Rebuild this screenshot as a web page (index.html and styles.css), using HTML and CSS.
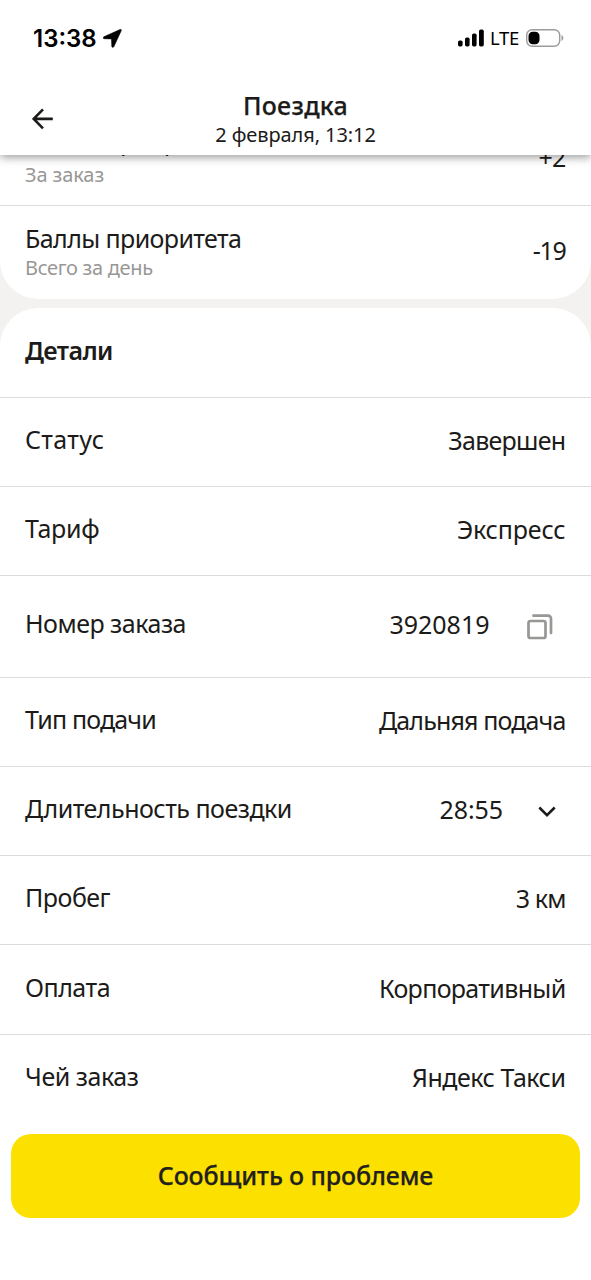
FILE: index.html
```html
<!DOCTYPE html>
<html lang="ru">
<head>
<meta charset="utf-8">
<title>Поездка</title>
<link rel="stylesheet" href="styles.css">
</head>
<body>
<div class="screen">
  <header class="header">
    <div class="status-bar">
      <div class="clock">
        <span class="time">13:38</span>
        <svg class="location" viewBox="0 0 19 19" width="19" height="19"><path d="M17.1.5.9 7.8C-.3 8.4 0 9.700 1.300 9.700L8.500 9.900 8.800 17.200C8.800 18.600 10.300 18.800 10.900 17.600L18.200 1.700C18.600.7 18 .1 17.100.5Z" stroke="#000" stroke-width=".6"/></svg>
      </div>
      <div class="system">
        <svg class="signal" viewBox="0 0 26 18" width="26" height="18"><rect x="0" y="11.500" width="4.600" height="6" rx="1.700"/><rect x="7" y="8.500" width="4.600" height="9" rx="1.700"/><rect x="14" y="4.500" width="4.600" height="13" rx="1.700"/><rect x="21" y="0.500" width="4.800" height="17" rx="1.700"/></svg>
        <span class="network">LTE</span>
        <svg class="battery" viewBox="0 0 38 18" width="38" height="18"><rect x=".7" y=".7" width="33" height="16.600" rx="5.500" fill="none" stroke="#9b9b9b" stroke-width="1.400"/><rect x="2.500" y="2.700" width="11" height="12.600" rx="4.200"/><path d="M35.500 6v6c2.400-1 2.400-5 0-6Z" fill="#9b9b9b"/></svg>
      </div>
    </div>
    <div class="nav">
      <svg class="back" viewBox="0 0 22 22" width="22" height="22"><path d="M11 1.300 1.700 10.900 11 20.300M2 10.900H20.800"/></svg>
      <div class="heading">
        <h1 class="title">Поездка</h1>
        <div class="subtitle">2 февраля, 13:12</div>
      </div>
    </div>
  </header>
  <main class="content">
    <section class="card card-points">
      <div class="row row-points row-scrolled">
        <div class="stack"><span class="label label-points">Баллы приоритета</span><span class="hint">За заказ</span></div>
        <span class="value value-points">+2</span>
      </div>
      <div class="row row-points">
        <div class="stack"><span class="label label-points">Баллы приоритета</span><span class="hint hint-day">Всего за день</span></div>
        <span class="value value-points">-19</span>
      </div>
    </section>
    <section class="card card-details">
      <div class="row row-title"><h2 class="section-title">Детали</h2></div>
      <div class="row"><span class="label label-status">Статус</span><span class="value value-status">Завершен</span></div>
      <div class="row"><span class="label label-tariff">Тариф</span><span class="value value-tariff">Экспресс</span></div>
      <div class="row row-number"><span class="label label-number">Номер заказа</span>
        <div class="action"><span class="value value-number">3920819</span>
          <svg class="copy" viewBox="0 0 26 26" width="26" height="26"><rect x="1.500" y="7" width="17" height="17" rx="2"/><path d="M6.500 1.700H21a3 3 0 0 1 3 3V19"/></svg></div></div>
      <div class="row"><span class="label label-type">Тип подачи</span><span class="value value-type">Дальняя подача</span></div>
      <div class="row"><span class="label label-duration">Длительность поездки</span>
        <div class="action"><span class="value value-duration">28:55</span>
          <svg class="chevron" viewBox="0 0 18 11" width="18" height="11"><path d="m1.300 1.500 7.700 7.700 7.700-7.700"/></svg></div></div>
      <div class="row"><span class="label label-mileage">Пробег</span><span class="value value-mileage">3 км</span></div>
      <div class="row"><span class="label label-payment">Оплата</span><span class="value value-payment">Корпоративный</span></div>
      <div class="row"><span class="label label-owner">Чей заказ</span><span class="value value-owner">Яндекс Такси</span></div>
    </section>
  </main>
  <footer class="footer"><button class="report" type="button">Сообщить о проблеме</button></footer>
</div>
</body>
</html>
```

FILE: styles.css
```css
* { box-sizing: border-box; }
body { margin: 0; background: #fff; color: #1c1b19; font-family: "Noto Sans", sans-serif; }
.screen { display: flex; flex-direction: column; height: 1280px; overflow: hidden; background: #fff; }

.header { position: relative; z-index: 1; flex: none; height: 155px; background: #fff; box-shadow: 0 2px 9px rgba(0, 0, 0, .42); }
.status-bar { display: flex; justify-content: space-between; align-items: center; height: 76px; padding: 0 27px 0 33px; color: #000; }
.clock, .system { display: flex; align-items: center; }
.clock { gap: 6px; }
.time { font: 600 24px/30px Inter, sans-serif; padding-top: 1px; }
.network { margin: 0 7px 0 6px; font-size: 18.500px; line-height: 26px; letter-spacing: -.3px; }
.nav { display: grid; grid-template-columns: 75px 1fr 75px; height: 79px; }
.back { margin: 32px 0 0 32px; fill: none; stroke: #1c1b19; stroke-width: 2.600; }
.heading { display: flex; flex-direction: column; align-items: center; padding-top: 13px; }
.title { margin: 0; font-size: 25px; line-height: 32px; font-weight: 500; letter-spacing: .3px; }
.subtitle { padding-top: 1px; font-size: 20px; line-height: 26px; letter-spacing: -.080px; }

.content { flex: none; height: 965px; background: #f3f2f1; overflow: hidden; }
.card { background: #fff; overflow: hidden; }
.card-points { height: 144px; border-radius: 0 0 38px 38px; }
.card-details { margin-top: 9px; height: 812px; border-radius: 38px 38px 0 0; }
.row { display: flex; justify-content: space-between; align-items: center; height: 89.200px; padding: 0 25.500px 6px 25px; border-top: 1px solid #dcdcdc; }
.row-title { height: 88.500px; border-top: 0; padding-bottom: 5px; }
.row-number { height: 102px; padding-bottom: 7px; }
.row-points { height: 93px; padding-bottom: 2px; }
.row-scrolled { margin-top: -43px; border-top: 0; }
.stack { display: flex; flex-direction: column; }
.label, .value { font-size: 25px; line-height: 32px; white-space: nowrap; }
.value { padding-top: 2px; }
.hint { margin-top: 1px; font-size: 20px; line-height: 25px; color: #999795; }
.row-scrolled .label { margin-top: -4px; }
.row-scrolled .hint { margin-top: 6px; letter-spacing: -.100px; }
.hint-day { letter-spacing: -.300px; }
.section-title { margin: 0; font-size: 25px; line-height: 32px; font-weight: 600; letter-spacing: -.600px; }

.label-points { letter-spacing: -.600px; }
.value-points { padding: 0 0 2px; letter-spacing: -1.300px; }
.row-scrolled .value-points { padding-bottom: 1px; letter-spacing: -.800px; }
.label-status { letter-spacing: .350px; }
.value-status { letter-spacing: -.700px; }
.label-tariff { letter-spacing: -.350px; }
.value-tariff { letter-spacing: -.150px; }
.label-number { letter-spacing: -.500px; }
.label-type { letter-spacing: -.850px; }
.value-type { letter-spacing: -.860px; }
.label-duration { letter-spacing: -.500px; }
.value-duration { letter-spacing: -.100px; }
.label-mileage { letter-spacing: -.500px; }
.value-mileage { letter-spacing: -.900px; }
.label-payment { letter-spacing: -.500px; }
.value-payment { letter-spacing: -.660px; }
.label-owner { letter-spacing: -.450px; }
.value-owner { letter-spacing: -.480px; }
.action { display: flex; align-items: center; }
.copy { margin: 9px 12.500px 0 37.500px; fill: none; stroke: #999795; stroke-width: 2.700; stroke-linecap: round; }
.chevron { margin: 6px 9.500px 0 35px; fill: none; stroke: #1c1b19; stroke-width: 2.500; }

.footer { padding: 14px 11px 0; }
.report { display: block; width: 100%; height: 84px; padding: 0 0 3px; border: 0; border-radius: 20px; background: #fce000; color: #21201f; font: 500 25px/32px "Noto Sans", sans-serif; letter-spacing: -.120px; -webkit-text-stroke: .250px #21201f; }
.title { -webkit-text-stroke: .250px #1c1b19; }
```
